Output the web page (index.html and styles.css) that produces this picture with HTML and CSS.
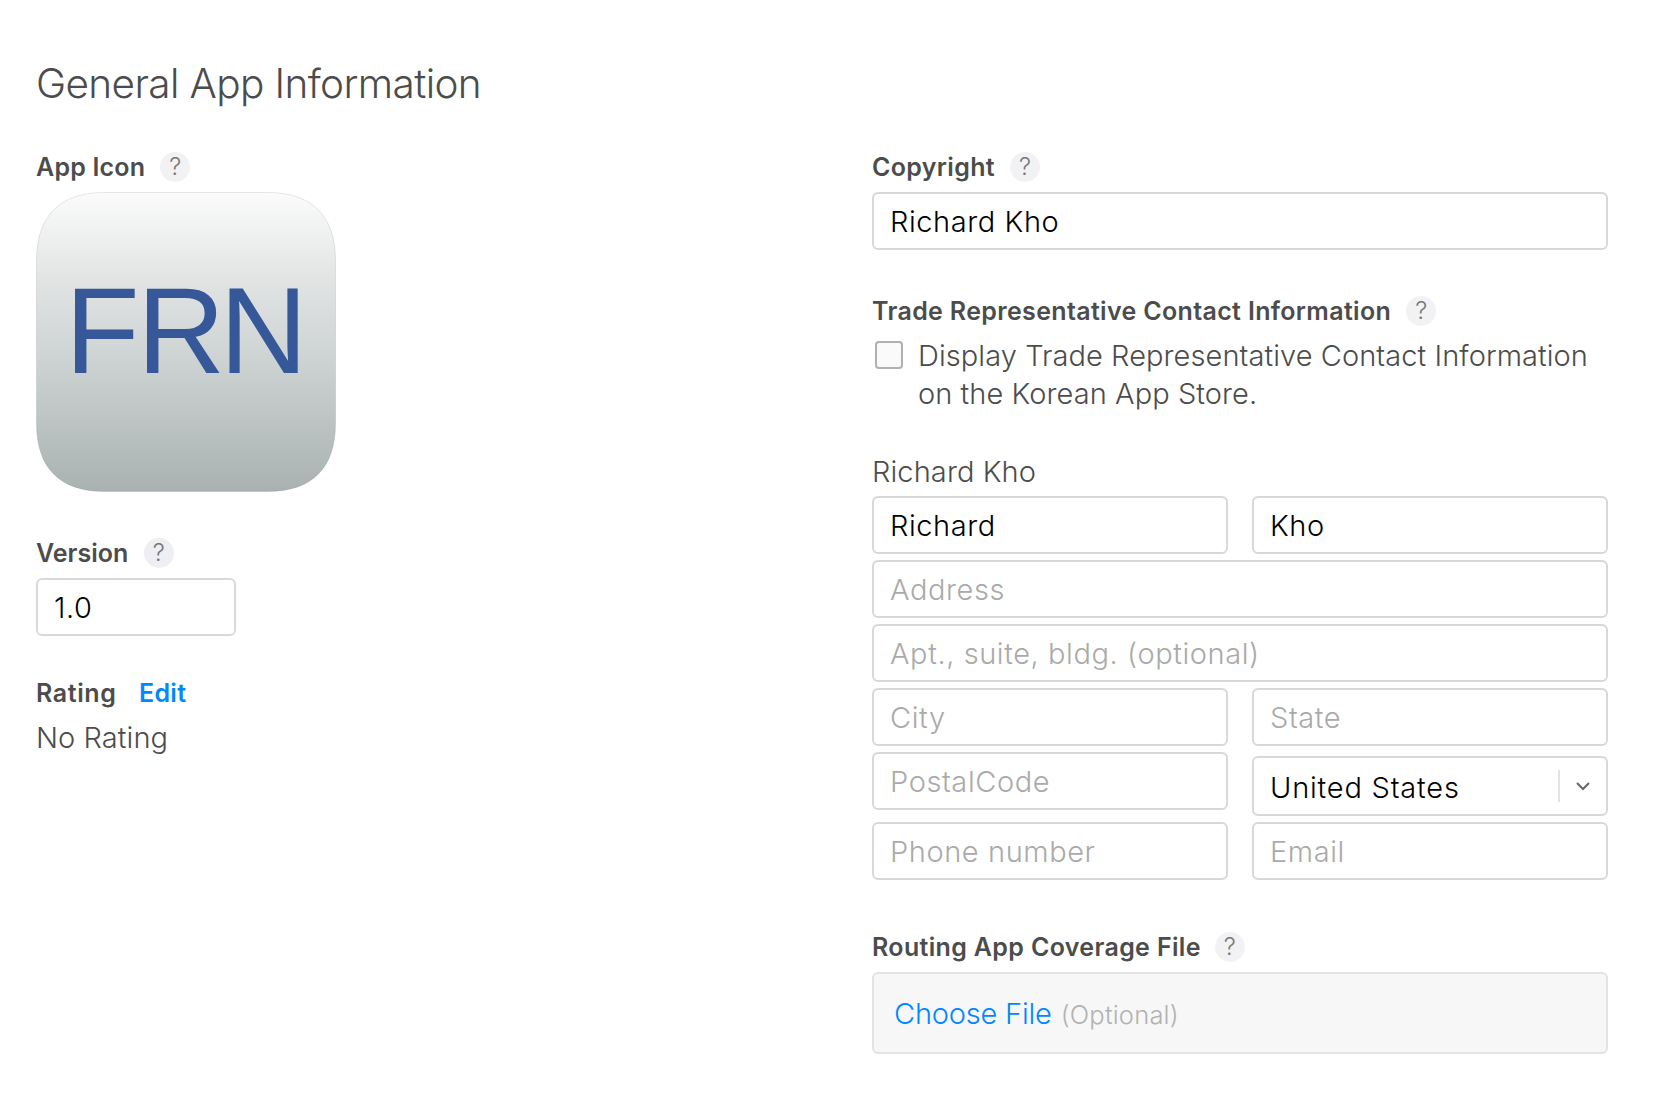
FILE: index.html
```html
<!DOCTYPE html>
<html lang="en">
<head>
<meta charset="utf-8">
<title>General App Information</title>
<link rel="stylesheet" href="styles.css">
</head>
<body>
<main class="page">
  <h1 class="title">General App Information</h1>
  <div class="columns">
    <section class="col-left">
      <div class="label label-tight">App Icon <span class="help">?</span></div>
      <svg class="app-icon" viewBox="0 0 300 300" role="img" aria-label="FRN">
        <defs>
          <linearGradient id="sky" x1="0" y1="0" x2="0" y2="1">
            <stop offset="0" stop-color="#fbfbfb"/>
            <stop offset="0.3" stop-color="#e1e3e3"/>
            <stop offset="0.6" stop-color="#cad0d0"/>
            <stop offset="1" stop-color="#a9b2b1"/>
          </linearGradient>
        </defs>
        <path d="M68 .5H232C276 .5 299.500 24 299.500 68V232C299.500 276 276 299.500 232 299.500H68C24 299.500 .5 276 .5 232V68C.5 24 24 .5 68 .5Z" fill="url(#sky)" stroke="#000" stroke-opacity=".09"/>
        <text class="app-icon-text" x="29 101 183.500" y="180.500">FRN</text>
      </svg>
      <div class="field">
        <div class="label label-version">Version <span class="help help-dark">?</span></div>
        <input class="input input-version" value="1.0">
      </div>
      <div class="label label-rating">Rating <a class="edit">Edit</a></div>
      <div class="text rating-value">No Rating</div>
    </section>
    <section class="col-right">
      <div class="label">Copyright <span class="help">?</span></div>
      <input class="input" value="Richard Kho">
      <div class="field">
        <div class="label label-trade">Trade Representative Contact Information <span class="help">?</span></div>
        <label class="check">
          <span class="box"></span>
          <span class="text check-text">Display Trade Representative Contact Information<br>on the Korean App Store.</span>
        </label>
      </div>
      <div class="text contact-name">Richard Kho</div>
      <div class="form">
        <input class="input" value="Richard">
        <input class="input" value="Kho">
        <input class="input wide" placeholder="Address">
        <input class="input wide" placeholder="Apt., suite, bldg. (optional)">
        <input class="input" placeholder="City">
        <input class="input" placeholder="State">
        <input class="input" placeholder="PostalCode">
        <div class="input select">
          <span class="select-value">United States</span>
          <span class="select-arrow">
            <svg width="14" height="9" viewBox="0 0 14 9"><path d="M1 1L7 7L13 1" fill="none" stroke="#666" stroke-width="2"/></svg>
          </span>
        </div>
        <input class="input" placeholder="Phone number">
        <input class="input" placeholder="Email">
      </div>
      <div class="label label-routing">Routing App Coverage File <span class="help">?</span></div>
      <div class="upload"><a class="choose">Choose File</a><span class="optional">(Optional)</span></div>
    </section>
  </div>
</main>
</body>
</html>
```
FILE: styles.css
```css
* { box-sizing: border-box; }
body {
  margin: 0;
  background: #fff;
  color: #4c4c4c;
  font: 300 29px/38px Inter, "Liberation Sans", sans-serif;
}
.page { padding: 59px 56px 0 36px; }
.title {
  margin: 0 0 43px;
  font-size: 40.5px;
  line-height: 50px;
  font-weight: 300;
  letter-spacing: -0.62px;
}
.columns { display: flex; justify-content: space-between; }
.col-left { width: 300px; }
.col-right { width: 736px; }

.label {
  display: flex;
  align-items: center;
  gap: 15px;
  height: 30px;
  margin-bottom: 10px;
  font-size: 25px;
  line-height: 30px;
  font-weight: 560;
  letter-spacing: 0.34px;
  white-space: nowrap;
}
.label-tight { letter-spacing: 0.2px; }
.label-version { letter-spacing: 0; gap: 15.5px; }
.label-rating { margin-top: 42px; gap: 22.5px; letter-spacing: 0.6px; }
.label-routing { margin-top: 52px; gap: 14px; }
.help {
  width: 30px;
  height: 30px;
  border-radius: 50%;
  background: #f2f2f4;
  color: #777;
  font-size: 24px;
  font-weight: 300;
  letter-spacing: 0;
  text-align: center;
}
.help-dark { background: #eeeef3; }
.edit { color: #0088ff; letter-spacing: 0.3px; }
.field { margin-top: 46px; }

.app-icon { display: block; width: 300px; height: 300px; }
.app-icon-text { font: 122px "Liberation Sans", Arial, sans-serif; fill: #365899; }

.text { letter-spacing: 0.07px; white-space: nowrap; }
.rating-value { padding-top: 1px; }
.check-text { padding-top: 1px; }
.input {
  display: block;
  width: 100%;
  height: 58px;
  margin: 0;
  padding: 0 15px 0 16px;
  border: 2px solid #d8d8d8;
  border-radius: 6px;
  background: #fff;
  color: #000;
  font: inherit;
  letter-spacing: 0.58px;
}
.input::placeholder { color: #aaa; opacity: 1; }
.input-version { width: 200px; }

.check { display: flex; }
.box {
  flex: none;
  width: 28px;
  height: 28px;
  margin: 5px 15px 0 3px;
  border: 2px solid #b0b0b0;
  border-radius: 4px;
  background: #fafafa;
}
.contact-name { margin: 40px 0 5px; letter-spacing: 0.1px; }

.form {
  display: grid;
  grid-template-columns: 1fr 1fr;
  gap: 6px 24px;
}
.wide { grid-column: span 2; }
.select {
  display: flex;
  align-items: center;
  justify-content: space-between;
  height: 60px;
  margin-top: 4px;
  padding-right: 0;
}
.select-value { padding-top: 4px; letter-spacing: 0.8px; }
.select-arrow {
  display: flex;
  align-items: center;
  justify-content: center;
  width: 48px;
  height: 32px;
  border-left: 2px solid #e3e3e3;
}

.upload {
  display: flex;
  align-items: baseline;
  gap: 9px;
  height: 82px;
  padding: 21px 20px 19px;
  border: 2px solid #e3e3e3;
  border-radius: 6px;
  background: #f7f7f7;
}
.choose { color: #0088ff; letter-spacing: -0.2px; }
.optional { color: #b2b2b2; font-size: 25.5px; letter-spacing: 0.2px; }
```
